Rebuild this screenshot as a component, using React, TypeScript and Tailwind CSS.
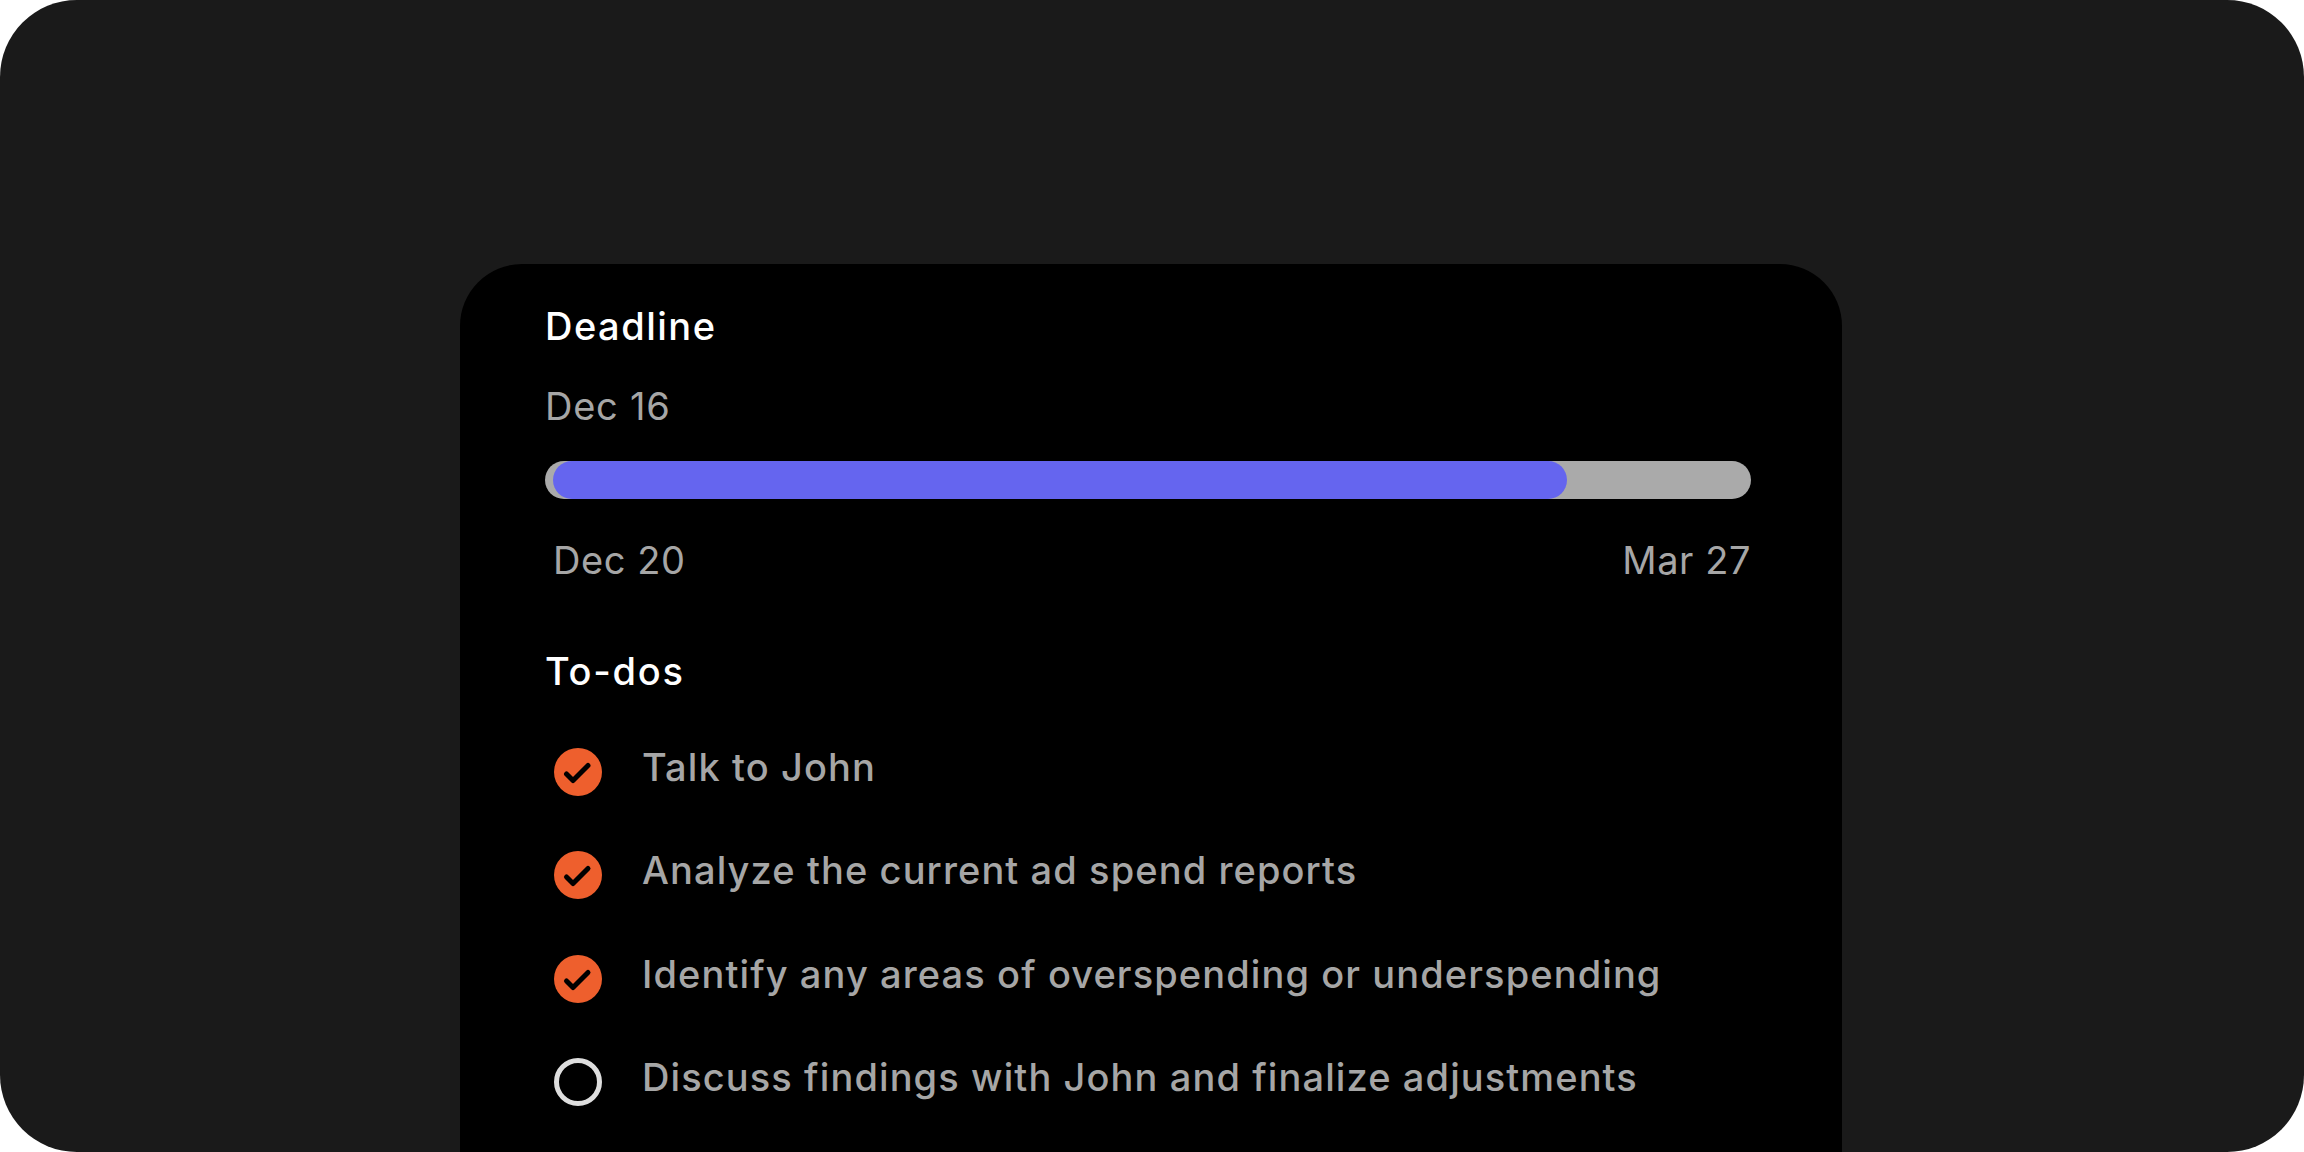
import React from "react";

const todos = [
  { label: "Talk to John", done: true },
  { label: "Analyze the current ad spend reports", done: true },
  { label: "Identify any areas of overspending or underspending", done: true },
  { label: "Discuss findings with John and finalize adjustments", done: false },
];

const TodoMark = ({ done }: { done: boolean }) =>
  done ? (
    <span className="flex h-[48px] w-[48px] shrink-0 items-center justify-center rounded-full bg-[#ee5f2d]">
      <svg width="48" height="48" viewBox="0 0 48 48" fill="none">
        <path
          d="M12.5 26 L19 32.5 L34 17.5"
          stroke="#000"
          strokeWidth="5"
          strokeLinecap="round"
          strokeLinejoin="round"
        />
      </svg>
    </span>
  ) : (
    <span className="h-[48px] w-[48px] shrink-0 rounded-full border-[5px] border-[#dedede]" />
  );

export default function App() {
  return (
    <div className="h-[1152px] w-[2304px] overflow-hidden rounded-[77px] bg-[#1a1a1a] pt-[264px] font-['Inter',sans-serif]">
      <div className="ml-[460px] mr-[462px] h-[888px] rounded-t-[62px] bg-black pl-[85px] pr-[91px] pt-[39px]">
        <h2 className="text-[38px] leading-[46px] font-[450] tracking-[1.5px] text-white">
          Deadline
        </h2>
        <p className="mt-[34px] text-[38px] leading-[46px] tracking-[0.75px] text-[#a6a6a6]">Dec 16</p>
        <div className="mt-[32px] h-[38px] rounded-full bg-[#aaaaaa] pl-[8px] pr-[184px]">
          <div className="h-full rounded-full bg-[#6565ef]" />
        </div>
        <div className="mt-[38px] flex justify-between pl-[8px] text-[38px] leading-[46px] tracking-[0.55px] text-[#a6a6a6]">
          <span>Dec 20</span>
          <span>Mar 27</span>
        </div>
        <h2 className="mt-[65px] text-[38px] leading-[46px] font-[450] tracking-[1.75px] text-white">
          To-dos
        </h2>
        <ul className="mt-[54px] flex flex-col gap-[55.34px]">
          {todos.map((todo) => (
            <li key={todo.label} className="flex items-start pl-[9px]">
              <TodoMark done={todo.done} />
              <span className="ml-[40px] -mt-[4px] text-[38px] leading-[46px] font-[450] tracking-[1.1px] text-[#a6a6a6]">
                {todo.label}
              </span>
            </li>
          ))}
        </ul>
      </div>
    </div>
  );
}
